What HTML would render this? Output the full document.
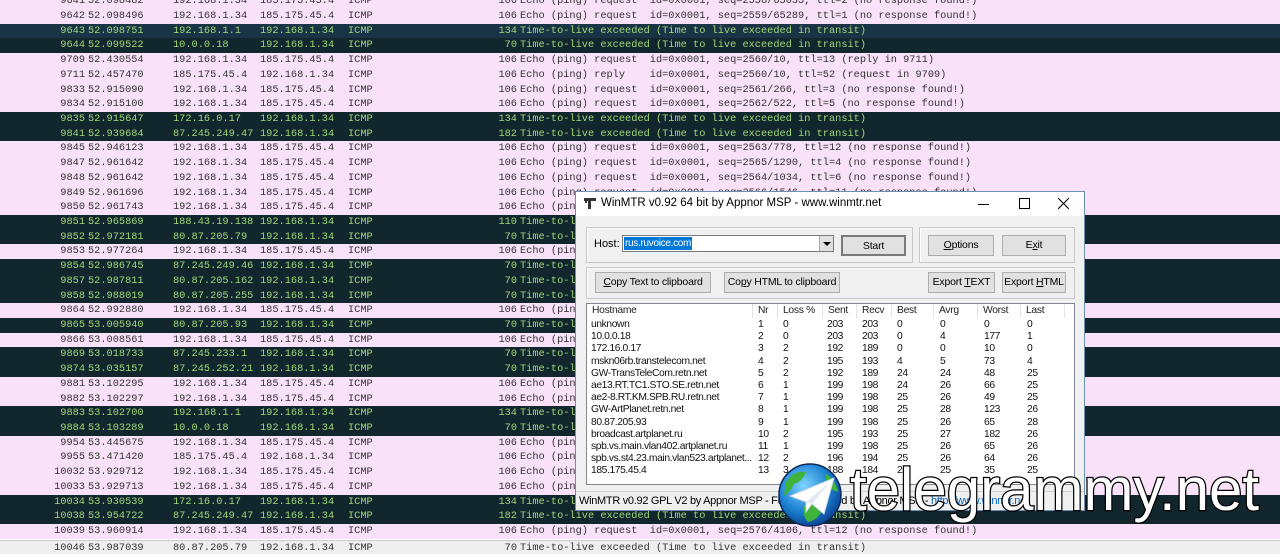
<!DOCTYPE html>
<html><head><meta charset="utf-8"><style>
*{margin:0;padding:0;box-sizing:border-box}
body{width:1280px;height:555px;overflow:hidden;background:#fff;position:relative;font-family:"Liberation Mono",monospace}
.r{position:absolute;left:0;width:1280px;height:14.72px;font-size:10.3px;line-height:14.72px;white-space:pre;background:#f9e1f9;color:#333}
.r.d{background:#12262d;color:#a0d878}
.r.b{background:#1a3345}
.r.g{background:#eeeeee;border-top:1px solid #ccc}
.r span{position:absolute;top:0}
.no{right:1195px;text-align:right}
.t{left:88px}.s{left:173px}.ds{left:260px}.p{left:348px}
.l{right:763px;text-align:right}.i{left:520px}
#dlg{position:absolute;left:575px;top:191px;width:510px;height:320px;background:#f0f0f0;border:1px solid #6f8fb0;font-family:"Liberation Sans",sans-serif;font-size:11px;color:#000}
#tb{position:absolute;left:0;top:0;width:508px;height:24px;background:#fff}
.btn{position:absolute;height:21px;border:1px solid #adadad;background:#e1e1e1;text-align:center;line-height:19px;font-size:10.5px;letter-spacing:-0.2px}
.grp{position:absolute;border:1px solid #c8c8c8;box-shadow:inset 1px 1px 0 #fff}
#tbl{position:absolute;left:10px;top:111px;width:489px;height:182px;background:#fff;border:1px solid #828790;overflow:hidden}
.h{position:absolute;top:0;height:14px;border-right:1px solid #e3e3e3;font-size:10.3px;line-height:14px;padding-left:5px;color:#222;letter-spacing:-0.3px}
.c{position:absolute;font-size:10.3px;line-height:12.2px;white-space:pre;color:#111;letter-spacing:-0.4px}
</style></head><body>

<div style="position:absolute;left:0;top:1.5px;width:1280px;height:555px">
<div class="r" style="top:-7.3px"><span class="no">9641</span><span class="t">52.098482</span><span class="s">192.168.1.34</span><span class="ds">185.175.45.4</span><span class="p">ICMP</span><span class="l">106</span><span class="i">Echo (ping) request  id=0x0001, seq=2558/65035, ttl=2 (no response found!)</span></div>
<div class="r" style="top:7.4px"><span class="no">9642</span><span class="t">52.098496</span><span class="s">192.168.1.34</span><span class="ds">185.175.45.4</span><span class="p">ICMP</span><span class="l">106</span><span class="i">Echo (ping) request  id=0x0001, seq=2559/65289, ttl=1 (no response found!)</span></div>
<div class="r d b" style="top:22.1px"><span class="no">9643</span><span class="t">52.098751</span><span class="s">192.168.1.1</span><span class="ds">192.168.1.34</span><span class="p">ICMP</span><span class="l">134</span><span class="i">Time-to-live exceeded (Time to live exceeded in transit)</span></div>
<div class="r d" style="top:36.9px"><span class="no">9644</span><span class="t">52.099522</span><span class="s">10.0.0.18</span><span class="ds">192.168.1.34</span><span class="p">ICMP</span><span class="l">70</span><span class="i">Time-to-live exceeded (Time to live exceeded in transit)</span></div>
<div class="r" style="top:51.6px"><span class="no">9709</span><span class="t">52.430554</span><span class="s">192.168.1.34</span><span class="ds">185.175.45.4</span><span class="p">ICMP</span><span class="l">106</span><span class="i">Echo (ping) request  id=0x0001, seq=2560/10, ttl=13 (reply in 9711)</span></div>
<div class="r" style="top:66.3px"><span class="no">9711</span><span class="t">52.457470</span><span class="s">185.175.45.4</span><span class="ds">192.168.1.34</span><span class="p">ICMP</span><span class="l">106</span><span class="i">Echo (ping) reply    id=0x0001, seq=2560/10, ttl=52 (request in 9709)</span></div>
<div class="r" style="top:81px"><span class="no">9833</span><span class="t">52.915090</span><span class="s">192.168.1.34</span><span class="ds">185.175.45.4</span><span class="p">ICMP</span><span class="l">106</span><span class="i">Echo (ping) request  id=0x0001, seq=2561/266, ttl=3 (no response found!)</span></div>
<div class="r" style="top:95.7px"><span class="no">9834</span><span class="t">52.915100</span><span class="s">192.168.1.34</span><span class="ds">185.175.45.4</span><span class="p">ICMP</span><span class="l">106</span><span class="i">Echo (ping) request  id=0x0001, seq=2562/522, ttl=5 (no response found!)</span></div>
<div class="r d" style="top:110.5px"><span class="no">9835</span><span class="t">52.915647</span><span class="s">172.16.0.17</span><span class="ds">192.168.1.34</span><span class="p">ICMP</span><span class="l">134</span><span class="i">Time-to-live exceeded (Time to live exceeded in transit)</span></div>
<div class="r d" style="top:125.2px"><span class="no">9841</span><span class="t">52.939684</span><span class="s">87.245.249.47</span><span class="ds">192.168.1.34</span><span class="p">ICMP</span><span class="l">182</span><span class="i">Time-to-live exceeded (Time to live exceeded in transit)</span></div>
<div class="r" style="top:139.9px"><span class="no">9845</span><span class="t">52.946123</span><span class="s">192.168.1.34</span><span class="ds">185.175.45.4</span><span class="p">ICMP</span><span class="l">106</span><span class="i">Echo (ping) request  id=0x0001, seq=2563/778, ttl=12 (no response found!)</span></div>
<div class="r" style="top:154.6px"><span class="no">9847</span><span class="t">52.961642</span><span class="s">192.168.1.34</span><span class="ds">185.175.45.4</span><span class="p">ICMP</span><span class="l">106</span><span class="i">Echo (ping) request  id=0x0001, seq=2565/1290, ttl=4 (no response found!)</span></div>
<div class="r" style="top:169.3px"><span class="no">9848</span><span class="t">52.961642</span><span class="s">192.168.1.34</span><span class="ds">185.175.45.4</span><span class="p">ICMP</span><span class="l">106</span><span class="i">Echo (ping) request  id=0x0001, seq=2564/1034, ttl=6 (no response found!)</span></div>
<div class="r" style="top:184px"><span class="no">9849</span><span class="t">52.961696</span><span class="s">192.168.1.34</span><span class="ds">185.175.45.4</span><span class="p">ICMP</span><span class="l">106</span><span class="i">Echo (ping) request  id=0x0001, seq=2566/1546, ttl=11 (no response found!)</span></div>
<div class="r" style="top:198.8px"><span class="no">9850</span><span class="t">52.961743</span><span class="s">192.168.1.34</span><span class="ds">185.175.45.4</span><span class="p">ICMP</span><span class="l">106</span><span class="i">Echo (ping) request</span></div>
<div class="r d" style="top:213.5px"><span class="no">9851</span><span class="t">52.965869</span><span class="s">188.43.19.138</span><span class="ds">192.168.1.34</span><span class="p">ICMP</span><span class="l">110</span><span class="i">Time-to-live</span></div>
<div class="r d" style="top:228.2px"><span class="no">9852</span><span class="t">52.972181</span><span class="s">80.87.205.79</span><span class="ds">192.168.1.34</span><span class="p">ICMP</span><span class="l">70</span><span class="i">Time-to-live</span></div>
<div class="r" style="top:242.9px"><span class="no">9853</span><span class="t">52.977264</span><span class="s">192.168.1.34</span><span class="ds">185.175.45.4</span><span class="p">ICMP</span><span class="l">106</span><span class="i">Echo (ping)</span></div>
<div class="r d" style="top:257.6px"><span class="no">9854</span><span class="t">52.986745</span><span class="s">87.245.249.46</span><span class="ds">192.168.1.34</span><span class="p">ICMP</span><span class="l">70</span><span class="i">Time-to-live</span></div>
<div class="r d" style="top:272.3px"><span class="no">9857</span><span class="t">52.987811</span><span class="s">80.87.205.162</span><span class="ds">192.168.1.34</span><span class="p">ICMP</span><span class="l">70</span><span class="i">Time-to-live</span></div>
<div class="r d" style="top:287.1px"><span class="no">9858</span><span class="t">52.988019</span><span class="s">80.87.205.255</span><span class="ds">192.168.1.34</span><span class="p">ICMP</span><span class="l">70</span><span class="i">Time-to-live</span></div>
<div class="r" style="top:301.8px"><span class="no">9864</span><span class="t">52.992880</span><span class="s">192.168.1.34</span><span class="ds">185.175.45.4</span><span class="p">ICMP</span><span class="l">106</span><span class="i">Echo (ping)</span></div>
<div class="r d" style="top:316.5px"><span class="no">9865</span><span class="t">53.005940</span><span class="s">80.87.205.93</span><span class="ds">192.168.1.34</span><span class="p">ICMP</span><span class="l">70</span><span class="i">Time-to-live</span></div>
<div class="r" style="top:331.2px"><span class="no">9866</span><span class="t">53.008561</span><span class="s">192.168.1.34</span><span class="ds">185.175.45.4</span><span class="p">ICMP</span><span class="l">106</span><span class="i">Echo (ping)</span></div>
<div class="r d" style="top:345.9px"><span class="no">9869</span><span class="t">53.018733</span><span class="s">87.245.233.1</span><span class="ds">192.168.1.34</span><span class="p">ICMP</span><span class="l">70</span><span class="i">Time-to-live</span></div>
<div class="r d" style="top:360.6px"><span class="no">9874</span><span class="t">53.035157</span><span class="s">87.245.252.21</span><span class="ds">192.168.1.34</span><span class="p">ICMP</span><span class="l">70</span><span class="i">Time-to-live</span></div>
<div class="r" style="top:375.4px"><span class="no">9881</span><span class="t">53.102295</span><span class="s">192.168.1.34</span><span class="ds">185.175.45.4</span><span class="p">ICMP</span><span class="l">106</span><span class="i">Echo (ping)</span></div>
<div class="r" style="top:390.1px"><span class="no">9882</span><span class="t">53.102297</span><span class="s">192.168.1.34</span><span class="ds">185.175.45.4</span><span class="p">ICMP</span><span class="l">106</span><span class="i">Echo (ping)</span></div>
<div class="r d" style="top:404.8px"><span class="no">9883</span><span class="t">53.102700</span><span class="s">192.168.1.1</span><span class="ds">192.168.1.34</span><span class="p">ICMP</span><span class="l">134</span><span class="i">Time-to-live</span></div>
<div class="r d" style="top:419.5px"><span class="no">9884</span><span class="t">53.103289</span><span class="s">10.0.0.18</span><span class="ds">192.168.1.34</span><span class="p">ICMP</span><span class="l">70</span><span class="i">Time-to-live</span></div>
<div class="r" style="top:434.2px"><span class="no">9954</span><span class="t">53.445675</span><span class="s">192.168.1.34</span><span class="ds">185.175.45.4</span><span class="p">ICMP</span><span class="l">106</span><span class="i">Echo (ping)</span></div>
<div class="r" style="top:448.9px"><span class="no">9955</span><span class="t">53.471420</span><span class="s">185.175.45.4</span><span class="ds">192.168.1.34</span><span class="p">ICMP</span><span class="l">106</span><span class="i">Echo (ping)</span></div>
<div class="r" style="top:463.6px"><span class="no">10032</span><span class="t">53.929712</span><span class="s">192.168.1.34</span><span class="ds">185.175.45.4</span><span class="p">ICMP</span><span class="l">106</span><span class="i">Echo (ping)</span></div>
<div class="r" style="top:478.4px"><span class="no">10033</span><span class="t">53.929713</span><span class="s">192.168.1.34</span><span class="ds">185.175.45.4</span><span class="p">ICMP</span><span class="l">106</span><span class="i">Echo (ping)</span></div>
<div class="r d" style="top:493.1px"><span class="no">10034</span><span class="t">53.930539</span><span class="s">172.16.0.17</span><span class="ds">192.168.1.34</span><span class="p">ICMP</span><span class="l">134</span><span class="i">Time-to-live exceeded</span></div>
<div class="r d" style="top:507.8px"><span class="no">10038</span><span class="t">53.954722</span><span class="s">87.245.249.47</span><span class="ds">192.168.1.34</span><span class="p">ICMP</span><span class="l">182</span><span class="i">Time-to-live exceeded (Time to live exceeded in transit)</span></div>
<div class="r" style="top:522.5px"><span class="no">10039</span><span class="t">53.960914</span><span class="s">192.168.1.34</span><span class="ds">185.175.45.4</span><span class="p">ICMP</span><span class="l">106</span><span class="i">Echo (ping) request  id=0x0001, seq=2576/4106, ttl=12 (no response found!)</span></div>
<div class="r g" style="top:538px"><span class="no">10046</span><span class="t">53.987039</span><span class="s">80.87.205.79</span><span class="ds">192.168.1.34</span><span class="p">ICMP</span><span class="l">70</span><span class="i">Time-to-live exceeded (Time to live exceeded in transit)</span></div>
</div>

<div id="dlg">
 <div id="tb">
  <svg style="position:absolute;left:8px;top:6px" width="12" height="11" viewBox="0 0 12 11"><rect x="0" y="0" width="12" height="3" fill="#333"/><rect x="4" y="3" width="3" height="8" fill="#333"/><rect x="1" y="3" width="2" height="2" fill="#333"/></svg>
  <div style="position:absolute;left:25px;top:5px;font-size:11.5px">WinMTR v0.92 64 bit by Appnor MSP - www.winmtr.net</div>
  <div style="position:absolute;left:402px;top:12px;width:11px;height:1px;background:#000"></div>
  <div style="position:absolute;left:443px;top:6px;width:11px;height:11px;border:1px solid #000"></div>
  <svg style="position:absolute;left:482px;top:6px" width="11" height="11"><path d="M0 0L11 11M11 0L0 11" stroke="#000" stroke-width="1.1"/></svg>
 </div>
 <div class="grp" style="left:10px;top:35px;width:327px;height:36px"></div>
 <div style="position:absolute;left:18px;top:46px">Host:</div>
 <div style="position:absolute;left:46px;top:43px;width:212px;height:17px;background:#fff;border:1px solid #7a7a7a"></div>
 <div style="position:absolute;left:48px;top:45px;height:13px;background:#0078d7;color:#fff;font-size:10px;line-height:13px;padding:0 1px;letter-spacing:-0.3px">rus.ruvoice.com</div>
 <div style="position:absolute;left:243px;top:44px;width:14px;height:15px;background:#e1e1e1;border-left:1px solid #aaa"></div>
 <div style="position:absolute;left:247px;top:50px;border:4px solid transparent;border-top:4px solid #000;border-bottom:0"></div>
 <div class="btn" style="left:265px;top:43px;width:65px;border:2px solid #7a7a7a">Start</div>
 <div class="grp" style="left:343px;top:35px;width:156px;height:36px"></div>
 <div class="btn" style="left:352px;top:43px;width:66px"><u>O</u>ptions</div>
 <div class="btn" style="left:426px;top:43px;width:64px">E<u>x</u>it</div>
 <div class="grp" style="left:10px;top:75px;width:489px;height:32px"></div>
 <div class="btn" style="left:19px;top:80px;width:116px"><u>C</u>opy Text to clipboard</div>
 <div class="btn" style="left:148px;top:80px;width:116px">Co<u>p</u>y HTML to clipboard</div>
 <div class="btn" style="left:352px;top:80px;width:67px">Export <u>T</u>EXT</div>
 <div class="btn" style="left:426px;top:80px;width:64px">Export <u>H</u>TML</div>
 <div id="tbl">
  <div class="h" style="left:0;width:166px">Hostname</div>
  <div class="h" style="left:166px;width:25px">Nr</div>
  <div class="h" style="left:191px;width:45px">Loss %</div>
  <div class="h" style="left:236px;width:34px">Sent</div>
  <div class="h" style="left:270px;width:35px">Recv</div>
  <div class="h" style="left:305px;width:42px">Best</div>
  <div class="h" style="left:347px;width:44px">Avrg</div>
  <div class="h" style="left:391px;width:43px">Worst</div>
  <div class="h" style="left:434px;width:44px">Last</div>
  <div class="c" style="left:4px;top:15px">unknown
10.0.0.18
172.16.0.17
mskn06rb.transtelecom.net
GW-TransTeleCom.retn.net
ae13.RT.TC1.STO.SE.retn.net
ae2-8.RT.KM.SPB.RU.retn.net
GW-ArtPlanet.retn.net
80.87.205.93
broadcast.artplanet.ru
spb.vs.main.vlan402.artplanet.ru
spb.vs.st4.23.main.vlan523.artplanet...
185.175.45.4</div>
  <div class="c" style="left:171px;top:15px">1
2
3
4
5
6
7
8
9
10
11
12
13</div>
  <div class="c" style="left:196px;top:15px">0
0
2
2
2
1
1
1
1
2
1
2
3</div>
  <div class="c" style="left:240px;top:15px">203
203
192
195
192
199
199
199
199
195
199
196
188</div>
  <div class="c" style="left:275px;top:15px">203
203
189
193
189
198
198
198
198
193
198
194
184</div>
  <div class="c" style="left:310px;top:15px">0
0
0
4
24
24
25
25
25
25
25
25
25</div>
  <div class="c" style="left:353px;top:15px">0
4
0
5
24
26
26
28
26
27
26
26
25</div>
  <div class="c" style="left:397px;top:15px">0
177
10
73
48
66
49
123
65
182
65
64
35</div>
  <div class="c" style="left:440px;top:15px">0
1
0
4
25
25
25
26
28
26
26
26
25</div>
 </div>
 <div style="position:absolute;left:0;top:299px;width:508px;height:19px;border-top:1px solid #d0d0d0;font-size:11px;line-height:18px;padding-left:3px;white-space:nowrap;overflow:hidden;letter-spacing:-0.3px">WinMTR v0.92 GPL V2 by Appnor MSP - Fully redesigned by Appnor MSP - <span style="color:#0066cc">http://www.winmtr.net</span></div>
</div>

<svg style="position:absolute;left:776px;top:462px" width="68" height="66" viewBox="0 0 68 66">
 <defs><radialGradient id="gl" cx="40%" cy="35%" r="70%"><stop offset="0" stop-color="#7fd4ff"/><stop offset=".6" stop-color="#1a7fd0"/><stop offset="1" stop-color="#0b3f8f"/></radialGradient></defs>
 <circle cx="34" cy="33" r="31" fill="url(#gl)" stroke="#0a2a5a" stroke-width="1.5"/>
 <path d="M10 20 Q18 8 30 10 Q26 20 18 22 Q14 30 8 34 Z" fill="#3fb33a"/>
 <path d="M28 44 Q38 40 46 48 Q42 58 32 60 Q26 54 28 44 Z" fill="#3fb33a"/>
 <path d="M50 12 Q60 18 62 30 Q54 28 50 20 Z" fill="#3fb33a"/>
 <path d="M14 34 L58 16 L48 52 L36 42 L30 50 L30 40 Z" fill="#fff" stroke="#c8d8e8" stroke-width="1"/>
 <path d="M30 40 L54 20 L36 42" fill="#dde8f2"/>
</svg>
<div style="position:absolute;left:850px;top:455px;font-family:'Liberation Sans',sans-serif;font-size:60px;line-height:70px;color:#fff;-webkit-text-stroke:2.5px #000;paint-order:stroke fill;white-space:nowrap">telegrammy.net</div>
</body></html>
